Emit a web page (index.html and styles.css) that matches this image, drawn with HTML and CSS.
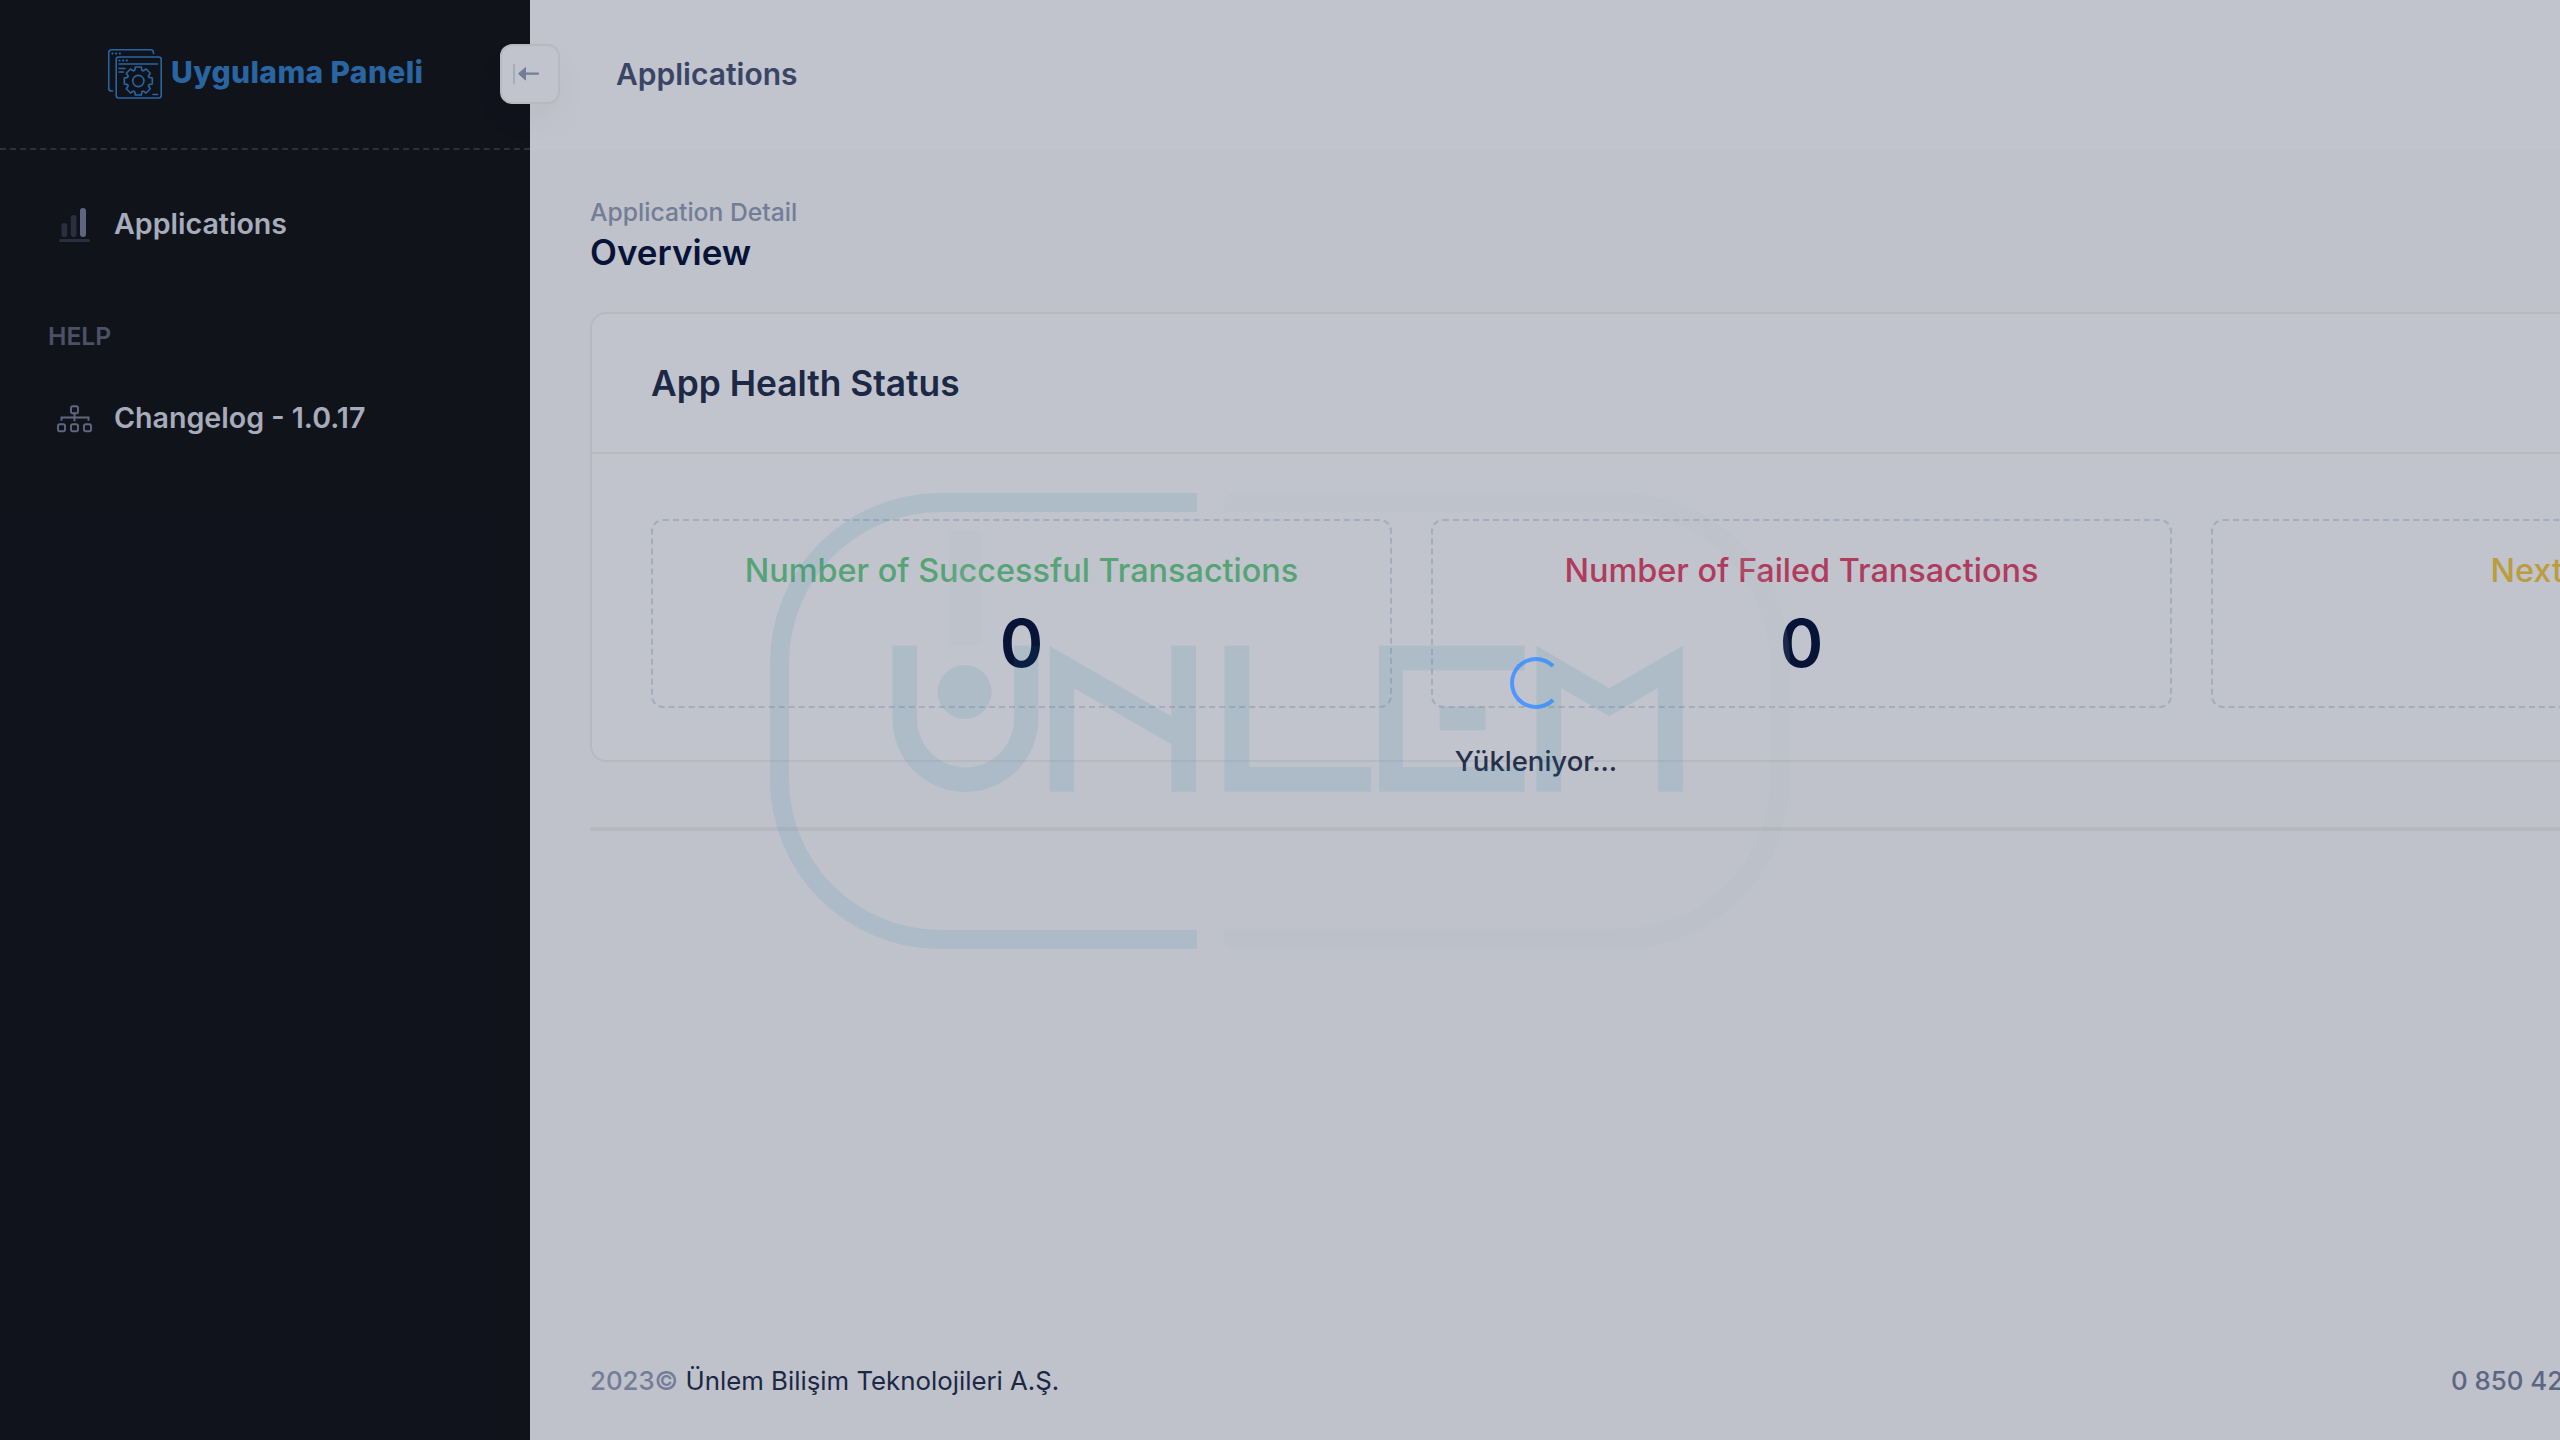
FILE: index.html
```html
<!DOCTYPE html>
<html lang="tr">
<head>
<meta charset="utf-8">
<title>Uygulama Paneli</title>
<link rel="stylesheet" href="styles.css">
</head>
<body>
<div class="page">
  <aside class="sidebar">
    <div class="brand">
      <svg class="brand-icon" viewBox="0 0 54 50" fill="none" stroke="#3580c5" stroke-width="1.6" stroke-linecap="round">
        <path d="M45.500 4.500V3.500a3 3 0 0 0-3-2.700H3.700a3 3 0 0 0-3 3V39a3 3 0 0 0 3 3h1"/>
        <rect x="8.200" y="8" width="45" height="41" rx="2.500"/>
        <path d="M11 15H49.500M11 19.500h6M11 23h4.500M45 45.500h4.500"/>
        <path d="M4.300 4.500h.3M8 4.500h.3M11.700 4.500h.3M11.300 11.500h.3M15 11.500h.3M18.700 11.500h.3" stroke-width="2"/>
        <circle cx="30.300" cy="32" r="5.600"/>
        <path transform="translate(30.300 32)" stroke-linejoin="round" d="M-3-14 3-14 3.600-10.700 5-10.100 7.800-12 12-7.800 10.100-5 10.700-3.600 14-3 14 3 10.700 3.600 10.100 5 12 7.800 7.800 12 5 10.100 3.600 10.700 3 14-3 14-3.600 10.700-5 10.100-7.800 12-12 7.800-10.100 5-10.700 3.600-14 3-14-3-10.700-3.600-10.100-5-12-7.800-7.800-12-5-10.100-3.600-10.700Z"/>
      </svg>
      <span class="brand-name">Uygulama Paneli</span>
    </div>
    <nav class="menu">
      <a class="menu-item">
        <svg class="menu-icon" viewBox="0 0 40 40">
          <g fill="#363843"><rect x="6.500" y="19" width="5.700" height="14" rx="2.800"/><rect x="15.800" y="11" width="5.700" height="22" rx="2.800"/><rect x="4" y="35" width="31" height="3" rx="1.500"/></g>
          <rect x="25" y="4" width="6" height="29" rx="3" fill="#7e8299"/>
        </svg>
        <span class="menu-text">Applications</span>
      </a>
      <div class="menu-heading">HELP</div>
      <a class="menu-item">
        <svg class="menu-icon" viewBox="0 -1.200 40 40" fill="none" stroke="#7e8299" stroke-width="1.900">
          <rect x="16" y="7" width="7" height="7" rx="1.800"/><rect x="3" y="25" width="7" height="7" rx="1.800"/><rect x="16" y="25" width="7" height="7" rx="1.800"/><rect x="29" y="25" width="7" height="7" rx="1.800"/>
          <path d="M19.500 14v8M6.500 21.500V18.300H33.500v3.200"/>
        </svg>
        <span class="menu-text">Changelog - 1.0.17</span>
      </a>
    </nav>
    <div class="toggle">
      <svg viewBox="0 0 60 60"><path d="M14 20V40" stroke="#dbdfe9" stroke-width="2"/><path d="M24 29.700H38" stroke="#99a1b7" stroke-width="2.200" stroke-linecap="round"/><path d="M18.500 29.700 25.500 23.500V36Z" fill="#99a1b7" stroke="#99a1b7" stroke-linejoin="round"/></svg>
    </div>
  </aside>
  <div class="main">
    <header class="topbar">Applications</header>
    <main class="content">
      <div class="crumb">Application Detail</div>
      <h1 class="title">Overview</h1>
      <section class="card">
        <h2 class="card-title">App Health Status</h2>
        <div class="stats">
          <div class="stat"><div class="stat-label success">Number of Successful Transactions</div><div class="stat-value">0</div></div>
          <div class="stat"><div class="stat-label danger">Number of Failed Transactions</div><div class="stat-value">0</div></div>
          <div class="stat"><div class="stat-label warning">Next</div></div>
        </div>
      </section>
      <div class="separator"></div>
    </main>
    <footer class="footer">
      <div><span class="year">2023©</span> <span class="company">Ünlem Bilişim Teknolojileri A.Ş.</span></div>
      <div class="phone">0 850 42</div>
    </footer>
  </div>
  <div class="loader">
    <div class="spinner"></div>
    <div class="loader-text">Yükleniyor...</div>
  </div>
  <svg class="watermark" viewBox="770 493 1020 456">
    <g class="mark-blue">
      <path d="M1197 493V512H940A151 151 0 0 0 789 663V779A151 151 0 0 0 940 930H1197V949H940A170 170 0 0 1 770 779V663A170 170 0 0 1 940 493Z"/>
      <path d="M892.500 645.700H917V719A48.500 48.500 0 0 0 1014 719V645.700H1038.300V719A72.900 72.900 0 0 1 892.500 719Z"/>
      <circle cx="964.700" cy="692" r="27"/>
      <path d="M1049.700 646 1171.400 716.300V645.700H1196V791.700H1171.400V744.300L1074 688.300V791.700H1049.700Z"/>
      <path d="M1224.500 645.700H1249.300V767H1370.800V791.700H1224.500Z"/>
      <path d="M1379 645.700H1524.600V670.300H1402.800V767H1524.600V791.700H1379Z"/>
      <path d="M1439.600 706.700H1485.500V730.300H1439.600Z"/>
      <path d="M1536.500 645.700 1609.300 688.300 1682.800 645.700V791.700H1657.900V688L1609.300 716.300 1561 688V791.700H1536.500Z"/>
    </g>
    <g class="mark-gray">
      <path d="M1234 493H1620A170 170 0 0 1 1790 663V779A170 170 0 0 1 1620 949H1234A10 10 0 0 1 1224 939V929H1620A150 150 0 0 0 1770 779V663A151 151 0 0 0 1620 512H1224V503A10 10 0 0 1 1234 493Z"/>
      <path d="M949 530H981V646H949Z"/>
    </g>
  </svg>
</div>
</body>
</html>
```
FILE: styles.css
```css
* { box-sizing: border-box; }
html, body { margin: 0; height: 100%; overflow: hidden; }
body { font-family: Inter, "Liberation Sans", sans-serif; background: #fcfcfc; color: #071437; }

.page { position: relative; display: flex; width: 3072px; height: 1440px; }

.sidebar { position: relative; width: 530px; flex: none; background: #131311; }
.brand { display: flex; align-items: center; gap: 9px; height: 150px; padding-left: 108px; border-bottom: 2px dashed #3a3942; }
.brand-icon { width: 54px; height: 50px; }
.brand-name { padding-bottom: 5px; font-size: 30px; font-weight: 800; letter-spacing: .36px; color: #3580c5; white-space: nowrap; }
.menu { padding: 46px 48px; }
.menu-item { display: flex; align-items: center; gap: 19px; height: 56px; padding-left: 7px; font-size: 28.6px; font-weight: 600; color: #dcdfe6; }
.menu-icon { width: 40px; height: 40px; flex: none; }
.menu-text { padding-bottom: 2px; }
.menu-heading { height: 138px; padding-top: 30px; display: flex; align-items: center; font-size: 24.7px; font-weight: 600; color: #636674; }
.toggle { position: absolute; left: 500px; top: 44px; width: 60px; height: 60px; border: 2px solid #f0f0ee; border-radius: 12px; background: #fff; box-shadow: 0 16px 32px rgba(0, 0, 0, .04); }
.toggle svg { display: block; margin: -2px; width: 60px; height: 60px; }

.main { flex: 1; min-width: 0; display: flex; flex-direction: column; }
.topbar { height: 150px; padding: 0 86px 2px; display: flex; align-items: center; background: #fff; font-size: 30px; font-weight: 600; color: #4b5675; }
.content { flex: 1; padding: 45px 60px 0; }
.crumb { font-size: 24.7px; line-height: 34px; font-weight: 500; color: #99a1b7; }
.title { margin: 1px 0 38px; font-size: 35px; line-height: 44px; font-weight: 600; }
.card { border: 2px solid #f0f0ee; border-radius: 16px; background: #fff; }
.card-title { margin: 0; height: 140px; padding: 0 59px; display: flex; align-items: center; border-bottom: 2px solid #f0f0ee; font-size: 35.3px; font-weight: 600; color: #252f4a; }
.stats { display: grid; grid-template-columns: repeat(3, 741px); gap: 39px; padding: 65px 59px 52px; }
.stat { height: 189px; padding-top: 29px; border: 2px dashed #dbdfe9; border-radius: 12px; text-align: center; }
.stat-label { font-size: 32.4px; line-height: 42px; font-weight: 500; }
.success { color: #70d38b; }
.danger { color: #e84968; }
.warning { width: 182px; margin: 0 auto; text-align: left; color: #f7cb40; }
.stat-value { font-size: 66px; line-height: 102px; font-weight: 600; }
.separator { margin-top: 65px; height: 4px; background: #f0f0ee; }
.footer { display: flex; justify-content: space-between; align-items: center; height: 118px; padding: 0 59px 2px 60px; font-size: 25.8px; }
.year { color: #99a1b7; font-weight: 500; }
.company { color: #252f4a; }
.phone { width: 562px; color: #78829d; font-weight: 500; }

.loader { position: absolute; inset: 0; display: flex; flex-direction: column; align-items: center; padding-top: 657px; background: rgba(7, 20, 55, .25); }
.spinner { width: 52px; height: 52px; border: 4px solid #5096ff; border-right-color: transparent; border-radius: 50%; }
.loader-text { margin-top: 34px; font-size: 27.5px; line-height: 36px; font-weight: 500; color: #252f4a; }

.watermark { position: absolute; left: 770px; top: 493px; width: 1020px; height: 456px; }
.mark-blue { fill: rgba(25, 133, 170, .113); }
.mark-gray { fill: rgba(176, 180, 180, .12); }
```
